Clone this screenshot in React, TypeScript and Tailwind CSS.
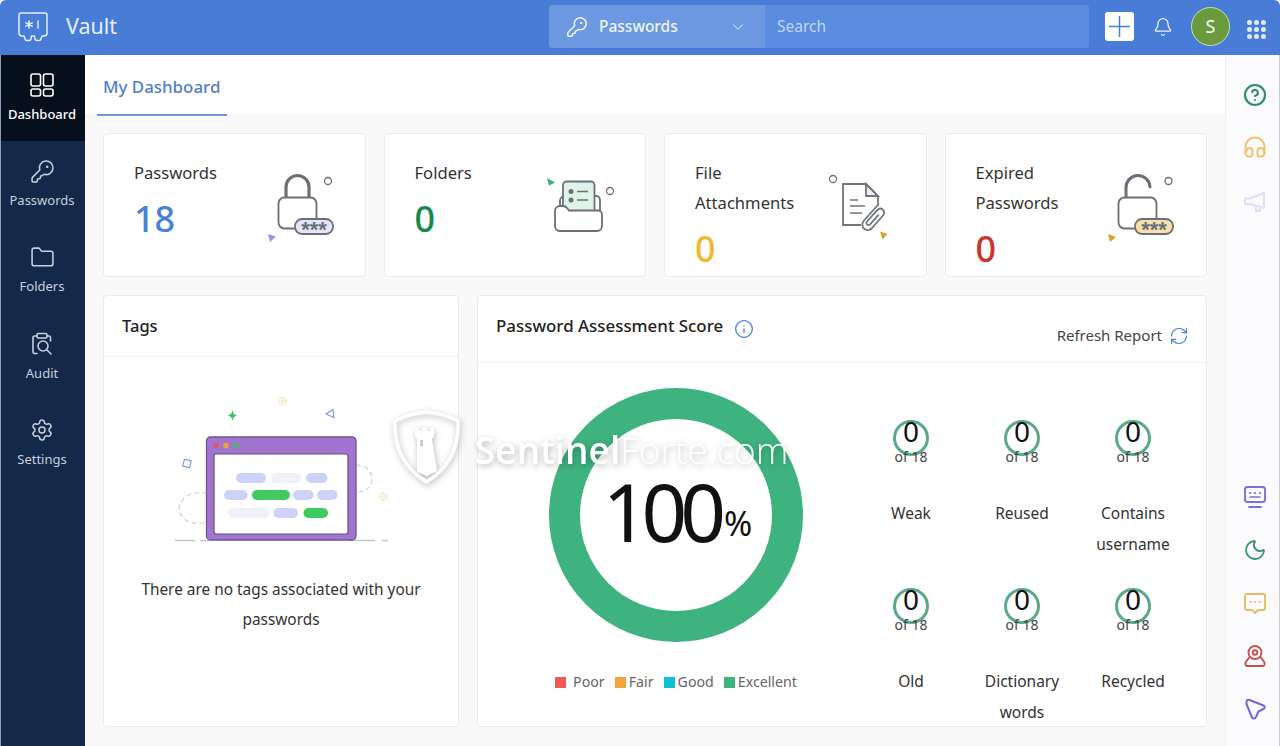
import React from "react";
import { Bell, ChevronDown, Folder, KeyRound, Moon, RefreshCw, Settings, Info, CircleHelp } from "lucide-react";

const DashIcon = () => (
  <svg width="24" height="24" viewBox="0 0 24 24" fill="none" stroke="currentColor" strokeWidth="1.6">
    <rect x="1" y="1" width="9.5" height="12" rx="2" />
    <rect x="13.5" y="1" width="9.5" height="12" rx="2" />
    <rect x="1" y="16" width="9.5" height="7" rx="2" />
    <rect x="13.5" y="16" width="9.5" height="7" rx="2" />
  </svg>
);
const AuditIcon = () => (
  <svg width="24" height="24" viewBox="0 0 24 24" fill="none" stroke="currentColor" strokeWidth="1.6" strokeLinecap="round" strokeLinejoin="round">
    <path d="M7 4H4.5A1.5 1.5 0 0 0 3 5.500V20a1.500 1.500 0 0 0 1.500 1.500H7" />
    <path d="M17 4h2a1.500 1.500 0 0 1 1.500 1.500V9" />
    <rect x="7" y="1.500" width="10" height="4.500" rx="1.500" />
    <circle cx="13" cy="14" r="5" />
    <path d="M17 18l4 4" />
  </svg>
);

const sideItems = [
  { label: "Passwords", icon: <KeyRound size={25} strokeWidth={1.5} /> },
  { label: "Folders", icon: <Folder size={25} strokeWidth={1.5} /> },
  { label: "Audit", icon: <AuditIcon /> },
  { label: "Settings", icon: <Settings size={24} strokeWidth={1.5} /> },
];

const Stars = ({ x, y, w, fill, stroke }: { x: number; y: number; w: number; fill: string; stroke: string }) => (
  <g>
    <rect x={x} y={y} width={w} height="15" rx="7" fill={fill} stroke={stroke} strokeWidth="1.800" />
    <text x={x + w / 2} y={y + 18} textAnchor="middle" fontSize="22" fontWeight="700" fill="#6b7078" fontFamily="'Liberation Sans', sans-serif">***</text>
  </g>
);

const LockIcon = () => (
  <svg width="110" height="90" viewBox="0 0 110 90" fill="none">
    <path d="M36 38V27a11.500 11.500 0 0 1 23 0v11" stroke="#6b7076" strokeWidth="3.200" />
    <rect x="28.500" y="37.500" width="38" height="31" rx="6" stroke="#6b7076" strokeWidth="1.800" fill="#fff" />
    <Stars x={45} y={59} w={38} fill="#e4e4fb" stroke="#6b7076" />
    <circle cx="78" cy="21" r="3.500" stroke="#6b7076" strokeWidth="1.300" />
    <path d="M18 74l8 2.500-6 5.500z" fill="#a08ff0" />
  </svg>
);
const FolderIcon = () => (
  <svg width="110" height="90" viewBox="0 0 110 90" fill="none">
    <path d="M30 52v-11a5 5 0 0 1 5-5h2M64 36h2a4 4 0 0 1 4 4v12" stroke="#6b7076" strokeWidth="1.800" />
    <path d="M33 52V25a3.500 3.500 0 0 1 3.500-3.500h24.500a3.500 3.500 0 0 1 3.500 3.500v27z" fill="#dff3e7" stroke="#6b7076" strokeWidth="1.800" />
    <circle cx="41" cy="31.500" r="2.500" fill="#6b7076" />
    <circle cx="41" cy="40" r="2.500" fill="#6b7076" />
    <path d="M47 31.500h11M47 40h11" stroke="#6b7076" strokeWidth="1.600" />
    <path d="M25 51a5 5 0 0 1 5-5h3a5 5 0 0 1 4 2l2 2.500h29a4 4 0 0 1 4 4V66a5 5 0 0 1-5 5H30a5 5 0 0 1-5-5z" fill="#fff" stroke="#6b7076" strokeWidth="1.800" />
    <circle cx="80" cy="31" r="3.500" stroke="#6b7076" strokeWidth="1.300" />
    <path d="M17 18l8 4.500-6 3z" fill="#2fb26f" />
  </svg>
);
const FileIcon = () => (
  <svg width="110" height="90" viewBox="0 0 110 90" fill="none">
    <path d="M46 65H28V24h23l12 12v10" stroke="#6f7479" strokeWidth="1.800" />
    <path d="M51 24v12h12z" fill="#eeeef8" stroke="#6f7479" strokeWidth="1.800" />
    <path d="M35 40h8M35 46h15M35 53h12" stroke="#6f7479" strokeWidth="1.600" />
    <path d="M67 51L53 66a3.500 3.500 0 0 0 5 5l11-11.500" stroke="#fff" strokeWidth="6" />
    <path d="M62 46L49 60.500c-3 3.500-1.500 7 .5 8.500s5 1.500 7.500-1L68 55.500c2-2.300 1-5-.5-6.200s-3.500-1-5.500 1L52 61.500c-1 1.300-.5 2.500.3 3.100s2 .6 3-.4l8-9" stroke="#6f7479" strokeWidth="1.800" strokeLinecap="round" />
    <circle cx="18" cy="19" r="3.500" stroke="#6f7479" strokeWidth="1.300" />
    <path d="M65 71.500l7.500 2.500-5 5.500z" fill="#d6a327" />
  </svg>
);
const OpenLockIcon = () => (
  <svg width="110" height="90" viewBox="0 0 110 90" fill="none">
    <path d="M31 37v-9a12 12 0 0 1 24-1" stroke="#6b7076" strokeWidth="3" strokeLinecap="round" />
    <rect x="23.500" y="37.500" width="38" height="31" rx="6" stroke="#6b7076" strokeWidth="1.800" fill="#fff" />
    <Stars x={40} y={59} w={38} fill="#fadfae" stroke="#6b7076" />
    <circle cx="73.500" cy="21" r="3.500" stroke="#6b7076" strokeWidth="1.300" />
    <path d="M13 74l8 3-6 5z" fill="#d6a327" />
  </svg>
);

const StatCard = ({ label, value, color, icon, pr }: { label: React.ReactNode; value: string; color: string; icon: React.ReactNode; pr: string }) => (
  <div className={`h-[144px] bg-white border border-[#ececf0] rounded flex items-center justify-between ${pr}`}>
    <div className="self-start pl-[30px] pt-[24px]">
      <div className="text-[16.600px] leading-[30px] text-[#333]">{label}</div>
      <div className={`mt-[8px] text-[36px] leading-[46px] font-medium ${color}`}>{value}</div>
    </div>
    {icon}
  </div>
);

const Mini = ({ label }: { label: React.ReactNode }) => (
  <div className="h-[168px] relative flex flex-col items-center text-center">
    <svg width="36" height="36" viewBox="0 0 36 36" className="absolute top-0 left-1/2 -translate-x-1/2">
      <circle cx="18" cy="18" r="16.500" fill="none" stroke="#5aa98b" strokeWidth="3" />
    </svg>
    <div className="relative text-[28px] leading-[22px] text-[#111]">0</div>
    <div className="relative mt-[6px] text-[14px] leading-[18px] text-[#444]">of 18</div>
    <div className="relative mt-[32px] text-[15.500px] leading-[31px] text-[#333]">{label}</div>
  </div>
);

const Illustration = () => (
  <svg width="240" height="170" viewBox="1 0 240 170" fill="none">
    <path d="M15 155.500h20M40 155.500h10M190 155.500h25M222 155.500h6" stroke="#c4c6cc" strokeWidth="1.300" />
    <path d="M47 108H37a18 18 0 0 0-18 15a16 16 0 0 0 18 15h10M196 80c10 0 16 6 16 14s-6 13-16 13" stroke="#c9cbd0" strokeWidth="1.100" strokeDasharray="5 3" />
    <rect x="46.500" y="52" width="149.500" height="103" rx="4" fill="#a274d0" stroke="#6d5590" strokeWidth="1.300" />
    <rect x="54" y="69" width="134" height="80" rx="2" fill="#fff" stroke="#5f4f80" strokeWidth="1.200" />
    <circle cx="56" cy="60.500" r="2.800" fill="#e0566d" />
    <circle cx="66" cy="60.500" r="2.800" fill="#eda23f" />
    <circle cx="76" cy="60.500" r="2.800" fill="#45b870" />
    <rect x="76" y="88" width="30" height="10" rx="5" fill="#cdd2f8" />
    <rect x="111" y="88" width="30" height="10" rx="5" fill="#eff1fb" />
    <rect x="146" y="88" width="21.500" height="10" rx="5" fill="#cdd2f8" />
    <rect x="64" y="105" width="23.500" height="10" rx="5" fill="#cdd2f8" />
    <rect x="92" y="105" width="38" height="10" rx="5" fill="#3fcb5e" />
    <rect x="133" y="105" width="20.500" height="10" rx="5" fill="#cdd2f8" />
    <rect x="157" y="105" width="20.500" height="10" rx="5" fill="#cdd2f8" />
    <rect x="68" y="123" width="41" height="10" rx="5" fill="#eff1fb" />
    <rect x="113.500" y="123" width="24.500" height="10" rx="5" fill="#cdd2f8" />
    <rect x="143.500" y="123" width="24.500" height="10" rx="5" fill="#3fcb5e" />
    <path d="M72.500 25c1 4 1.500 4.500 5 5.500-3.500 1-4 1.500-5 5.500-1-4-1.500-4.500-5-5.500 3.500-1 4-1.500 5-5.500z" fill="#3fc46c" />
    <path d="M173 24.500l-7 4.500 8 3.500z" stroke="#7d9fe0" strokeWidth="1.200" />
    <rect x="23.500" y="75" width="7" height="7" transform="rotate(15 27 78.500)" stroke="#7d9fe0" strokeWidth="1.200" />
    <circle cx="122.500" cy="16" r="3.500" stroke="#f0c56e" strokeWidth="1" strokeDasharray="1.500 1" />
    <circle cx="122.500" cy="16" r="1.800" fill="#fbeccd" />
    <circle cx="223.500" cy="111.500" r="3.500" stroke="#f0c56e" strokeWidth="1" strokeDasharray="1.500 1" />
    <circle cx="223.500" cy="111.500" r="1.800" fill="#fbeccd" />
  </svg>
);

const railClass = "w-[24px] h-[24px]";
const TopRail = () => (
  <div className="flex flex-col gap-[29px]">
    <CircleHelp size={24} strokeWidth={2.200} className="text-[#2f8f66]" />
    <svg className={railClass} viewBox="0 0 24 24" fill="none" stroke="#edc36f" strokeWidth="2" strokeLinecap="round">
      <path d="M2.500 17v-6a9.500 9.500 0 0 1 19 0v6" />
      <path d="M2.500 17a3.500 3.500 0 0 0 3.500 3.500h1.500A2 2 0 0 0 9.500 18.500v-3.500a3 3 0 0 0-6 0M21.500 17a3.500 3.500 0 0 1-3.500 3.500h-1.500a2 2 0 0 1-2-2v-3.500a3 3 0 0 1 6 0" />
    </svg>
    <svg className={railClass} viewBox="0 0 24 24" fill="none" stroke="#e2def8" strokeWidth="2" strokeLinejoin="round">
      <path d="M2 9.500h5L21 4v15L7 15H2z" />
      <path d="M13 17.500V22h4v-3" />
    </svg>
  </div>
);
const BottomRail = () => (
  <div className="flex flex-col gap-[29px]">
    <svg className={railClass} viewBox="0 0 24 24" fill="none" stroke="#7a72db" strokeWidth="1.900" strokeLinecap="round">
      <rect x="2" y="2" width="20" height="15" rx="2.500" />
      <path d="M6 22h12" />
      <path d="M7 8h.1M12 8h.1M17 8h.1" strokeWidth="2.200" />
      <path d="M7 12h10" strokeWidth="1.500" />
    </svg>
    <Moon size={24} strokeWidth={1.800} className="text-[#35936b]" />
    <svg className={railClass} viewBox="0 0 24 24" fill="none" stroke="#e6bd62" strokeWidth="1.900" strokeLinejoin="round" strokeLinecap="round">
      <path d="M4 3h16a2 2 0 0 1 2 2v12a2 2 0 0 1-2 2h-5l-3 3-3-3H4a2 2 0 0 1-2-2V5a2 2 0 0 1 2-2z" />
      <path d="M7.500 11h.1M12 11h.1M16.500 11h.1" strokeWidth="2.200" />
    </svg>
    <svg className={railClass} viewBox="0 0 24 24" fill="none" stroke="#c0524f" strokeWidth="1.900" strokeLinejoin="round">
      <circle cx="12" cy="8.500" r="6.500" />
      <circle cx="12" cy="8.500" r="2.300" />
      <path d="M6.500 13L2.500 18.500v2a1.500 1.500 0 0 0 1.500 1.500h16a1.500 1.500 0 0 0 1.500-1.500v-2L17.500 13" />
    </svg>
    <svg className={railClass} viewBox="0 0 24 24" fill="none" stroke="#6f68d8" strokeWidth="2" strokeLinejoin="round">
      <path d="M3.500 4.500C4 3 5 2.500 6.500 3L20.500 8.500C22 9.200 22.200 11 20.800 11.800L15.500 14.500L13 20C12 22 10 22 9 20.500L3.500 7z" />
    </svg>
  </div>
);

const Legend = ({ color, label, gap }: { color: string; label: string; gap: string }) => (
  <div className={`flex items-center ${gap}`}>
    <span className={`w-[11px] h-[11px] ${color}`} />
    <span>{label}</span>
  </div>
);

export default function App() {
  return (
    <div className="relative h-[746px] w-[1280px] overflow-hidden flex flex-col bg-[#fafafb] rounded-t-[6px] font-['Noto_Sans','Open_Sans',sans-serif]">
      {/* header */}
      <header className="h-[55px] shrink-0 bg-[#487cd6] flex items-center pb-[2px]">
        <svg width="30" height="30" viewBox="0 0 30 30" fill="none" stroke="#e6f0fc" strokeWidth="1.500" strokeLinejoin="round" className="ml-[18px]">
          <path d="M3 1h24a2 2 0 0 1 2 2v18a3 3 0 0 1-3 3h-2l-1 3a2 2 0 0 1-2 1.500h-2a2 2 0 0 1-2-1.500l-.5-3h-3l-.5 3a2 2 0 0 1-2 1.500H9a2 2 0 0 1-2-1.500L6 24H4a3 3 0 0 1-3-3V3a2 2 0 0 1 2-2z" />
          <path d="M11 9v7M7.800 10.800l6.400 3.400M14.200 10.800l-6.400 3.400M20 9v7" strokeLinecap="round" />
        </svg>
        <span className="ml-[18px] w-[52px] text-[21.500px] text-[#e8f1fc]">Vault</span>
        <div className="ml-[431px] h-[43px] w-[540px] flex rounded-[3px] overflow-hidden">
          <div className="w-[216px] bg-[#6b98e0] flex items-center pl-[17px] text-[#eef4fd]">
            <KeyRound size={22} strokeWidth={1.700} />
            <span className="ml-[11px] w-[79px] whitespace-nowrap text-[15.500px] font-medium">Passwords</span>
            <ChevronDown size={18} strokeWidth={1.300} className="ml-[51px]" />
          </div>
          <div className="flex-1 bg-[#5a8cdf] flex items-center pl-[12px] text-[15.500px] text-[#c3d5f3]">Search</div>
        </div>
        <div className="ml-[16px] w-[29px] h-[29px] bg-white rounded-[3px] flex items-center justify-center">
          <svg width="21" height="21" viewBox="0 0 21 21" stroke="#487cd6" strokeWidth="1.500"><path d="M10.500 0v21M0 10.500h21" /></svg>
        </div>
        <Bell size={20} strokeWidth={1.600} className="ml-[19px] text-[#eef4fd]" />
        <div className="ml-[18px] w-[39px] h-[39px] rounded-full bg-[#6a9a3c] border border-[#c7dcc0] flex items-center justify-center text-[18px] text-white">S</div>
        <div className="ml-[17px] mt-[6px] grid grid-cols-3 gap-[2px]">
          {Array.from({ length: 9 }).map((_, i) => (
            <span key={i} className="w-[5px] h-[5px] rounded-full bg-[#dfe9f9]" />
          ))}
        </div>
      </header>

      <div className="flex-1 flex min-h-0">
        {/* sidebar */}
        <nav className="w-[85px] shrink-0 bg-[#14284a] border-l border-[#8f9bb0] flex flex-col">
          <div className="h-[86px] bg-[#060f1c] flex flex-col items-center pt-[18px] pr-[2px] text-white">
            <DashIcon />
            <span className="mt-[8px] text-[13px] leading-[18px] font-medium">Dashboard</span>
          </div>
          {sideItems.map((s) => (
            <div key={s.label} className="h-[86.330px] flex flex-col items-center pt-[18px] pr-[2px] text-[#c6d0de]">
              <div className="h-[25px] flex items-center">{s.icon}</div>
              <span className="mt-[7px] text-[13px] leading-[18px]">{s.label}</span>
            </div>
          ))}
        </nav>

        {/* main */}
        <main className="flex-1 min-w-0 bg-[#f9f9fa]">
          <div className="h-[61px] bg-white border-b border-[#efeff2] pl-[12px]">
            <div className="h-[61px] w-[130px] border-b-2 border-[#6f97d8] pl-[6px] pt-[18px] text-[16.900px] leading-[28px] font-medium whitespace-nowrap text-[#4f7fca]">My Dashboard</div>
          </div>
          <div className="pl-[18px] pr-[18px] pt-[17px]">
            <div className="grid grid-cols-4 gap-[18px]">
              <StatCard label="Passwords" value="18" color="text-[#4a80d6]" icon={<LockIcon />} pr="pr-[5px]" />
              <StatCard label="Folders" value="0" color="text-[#16894f]" icon={<FolderIcon />} pr="pr-[5px]" />
              <StatCard label={<>File<br />Attachments</>} value="0" color="text-[#eeb92f]" icon={<FileIcon />} pr="pr-[1px]" />
              <StatCard label={<>Expired<br />Passwords</>} value="0" color="text-[#c8372d]" icon={<OpenLockIcon />} pr="pr-[1px]" />
            </div>
            <div className="mt-[18px] flex gap-[18px] h-[432px]">
              <section className="w-[356px] shrink-0 bg-white border border-[#ececf0] rounded flex flex-col items-center">
                <div className="w-full h-[61px] shrink-0 border-b border-[#f1f1f4] pl-[18px] flex items-center text-[16.500px] font-medium text-[#222]">Tags</div>
                <div className="mt-[28px]"><Illustration /></div>
                <p className="mt-[20px] w-[300px] text-center text-[15.400px] leading-[30px] text-[#333]">There are no tags associated with your passwords</p>
              </section>
              <section className="flex-1 bg-white border border-[#ececf0] rounded flex flex-col">
                <div className="h-[67px] shrink-0 border-b border-[#f1f1f4] pl-[18px] pr-[17px] flex justify-between">
                  <div className="flex items-center h-[59px] text-[16.900px] font-medium text-[#222] whitespace-nowrap">
                    Password Assessment Score
                    <Info size={20} strokeWidth={1.600} className="ml-[11px] mt-[6px] text-[#4a7fd0]" />
                  </div>
                  <div className="flex items-center mt-[21px] h-[36px] text-[15px] text-[#444]">
                    Refresh Report
                    <RefreshCw size={20} strokeWidth={1.400} className="ml-[7px] mt-[2px] text-[#4a7fd0]" />
                  </div>
                </div>
                <div className="flex">
                  <div className="w-[377px] pl-[19px] pt-[25px] flex flex-col items-center">
                    <div className="relative w-[254px] h-[254px]">
                      <svg width="254" height="254" viewBox="0 0 254 254">
                        <circle cx="127" cy="127" r="111.500" fill="none" stroke="#3eb27f" strokeWidth="31" />
                      </svg>
                      <div className="absolute inset-0 flex items-center justify-center pl-[3px] pb-[8px] text-[#111]">
                        <span className="text-[80px] leading-none font-normal tracking-[-7px]">100</span>
                        <span className="ml-[5px] text-[34px] leading-none font-normal mt-[24px]">%</span>
                      </div>
                    </div>
                    <div className="mt-[30px] flex gap-[10px] text-[14.200px] leading-[20px] text-[#666]">
                      <Legend color="bg-[#ef5a55]" label="Poor" gap="gap-[7px]" />
                      <Legend color="bg-[#f5a33f]" label="Fair" gap="gap-[3px]" />
                      <Legend color="bg-[#10bfd6]" label="Good" gap="gap-[3px]" />
                      <Legend color="bg-[#3eb27f]" label="Excellent" gap="gap-[3px]" />
                    </div>
                  </div>
                  <div className="w-[333px] ml-[0.500px] pt-[57px] grid grid-cols-3 content-start">
                    <Mini label="Weak" />
                    <Mini label="Reused" />
                    <Mini label={<>Contains<br />username</>} />
                    <Mini label="Old" />
                    <Mini label={<>Dictionary<br />words</>} />
                    <Mini label="Recycled" />
                  </div>
                </div>
              </section>
            </div>
          </div>
        </main>

        {/* right rail */}
        <aside className="w-[55px] shrink-0 bg-[#fbfafd] border-l border-r border-l-[#f0f0f3] border-r-[#c9ccd2] pl-[4px] flex flex-col items-center justify-between pt-[28px] pb-[25px]">
          <TopRail />
          <BottomRail />
        </aside>
      </div>

      {/* watermark */}
      <div className="absolute left-[393px] top-[410px] flex items-center pointer-events-none text-white [filter:drop-shadow(1px_2px_3px_rgba(0,0,0,0.28))]">
        <svg width="67" height="74" viewBox="0 0 67 74" fill="none">
          <path d="M33.500 2C44 3 56 6 65 11c1 22-6 45-31.500 61C8 56 1 33 2 11c9-5 21-8 31.500-9z" stroke="#fff" strokeWidth="3.500" />
          <path d="M24 62V29l-2-2v-9h4v3h3v-3h5v3h3v-3h4v9l-2 2 5 32-10 5z" fill="#fff" />
          <rect x="27" y="30" width="3" height="6" fill="#c9cdd3" />
        </svg>
        <span className="ml-[15px] mt-[5px] text-[37px] leading-none whitespace-nowrap font-['Open_Sans','Noto_Sans',sans-serif]">
          <span className="font-semibold">Sentinel</span><span className="font-light">Forte.com</span>
        </span>
      </div>
    </div>
  );
}
